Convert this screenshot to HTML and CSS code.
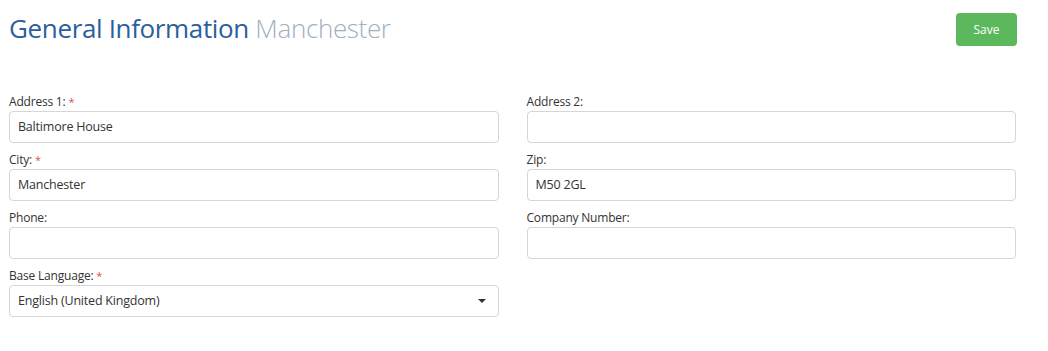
FILE: index.html
```html
<!DOCTYPE html>
<html>
<head>
<meta charset="utf-8">
<link rel="stylesheet" href="styles.css">
</head>
<body>
<div class="page">
  <div class="header">
    <h1 class="title">General Information <span class="sub">Manchester</span></h1>
    <button class="btn-save">Save</button>
  </div>
  <form class="form">
    <div class="field">
      <label>Address 1: <span class="req">*</span></label>
      <div class="input">Baltimore House</div>
    </div>
    <div class="field">
      <label>Address 2:</label>
      <div class="input"></div>
    </div>
    <div class="field">
      <label>City: <span class="req">*</span></label>
      <div class="input">Manchester</div>
    </div>
    <div class="field">
      <label>Zip:</label>
      <div class="input">M50 2GL</div>
    </div>
    <div class="field">
      <label>Phone:</label>
      <div class="input"></div>
    </div>
    <div class="field">
      <label>Company Number:</label>
      <div class="input"></div>
    </div>
    <div class="field">
      <label>Base Language: <span class="req">*</span></label>
      <div class="input select">English (United Kingdom)<span class="caret"></span></div>
    </div>
  </form>
</div>
</body>
</html>
```
FILE: styles.css
```css
* { box-sizing: border-box; }
body {
  margin: 0;
  background: #fff;
  font-family: "Open Sans", "Noto Sans", sans-serif;
  color: #333;
}
.page {
  padding: 13px 31px 0 9px;
}
.header {
  display: flex;
  justify-content: space-between;
  align-items: flex-start;
  height: 81px;
}
.title {
  margin: 0;
  font-family: "Open Sans", sans-serif;
  font-weight: 400;
  font-size: 26px;
  line-height: 30px;
  color: #2a5f9e;
  letter-spacing: -0.35px;
}
.sub {
  font-weight: 300;
  color: #9fb0c2;
}
.btn-save {
  width: 61px;
  height: 33px;
  border: none;
  border-radius: 4px;
  background: #5cb85c;
  color: #fff;
  font-family: "Open Sans", sans-serif;
  font-size: 12px;
  padding: 0;
}
.form {
  display: grid;
  grid-template-columns: 1fr 1fr;
  column-gap: 28px;
  row-gap: 9px;
  margin-right: 1px;
}
.field label {
  display: block;
  font-size: 12px;
  line-height: 15px;
  margin-bottom: 2px;
  color: #333;
  letter-spacing: -0.2px;
}
.req { color: #d9534f; font-size: 11px; }
.input {
  height: 32px;
  border: 1px solid #d6d6d6;
  border-radius: 4px;
  padding: 0 8px;
  font-size: 12.5px;
  line-height: 30px;
  color: #333;
  letter-spacing: -0.2px;
  position: relative;
}
.caret {
  position: absolute;
  right: 12px;
  top: 13px;
  width: 0;
  height: 0;
  border-left: 4px solid transparent;
  border-right: 4px solid transparent;
  border-top: 4px solid #333;
}
```
